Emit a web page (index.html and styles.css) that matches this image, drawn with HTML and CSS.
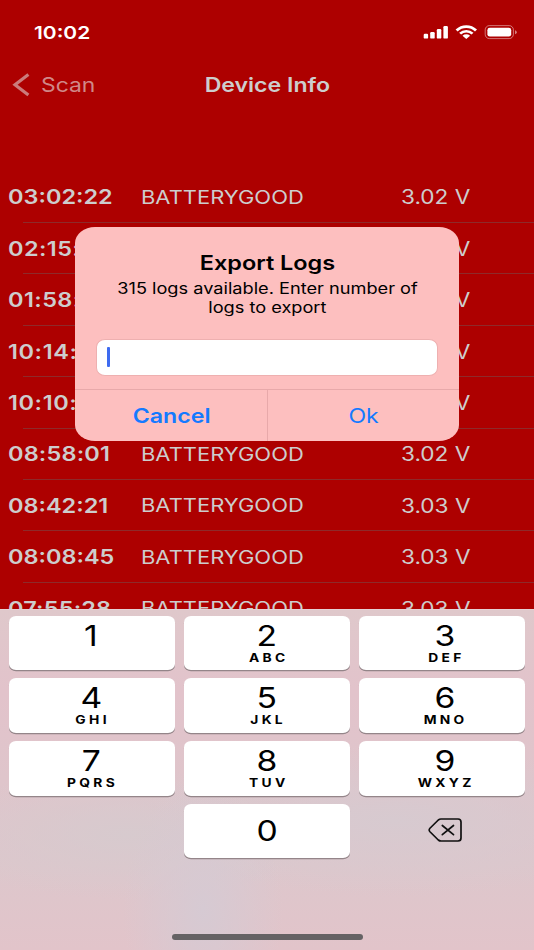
FILE: index.html
```
<!DOCTYPE html>
<html lang="en">
<head>
<meta charset="utf-8">
<title>Device Info</title>
<link rel="stylesheet" href="styles.css">
</head>
<body>
<div class="phone">
  <header class="status">
    <span class="clock">10:02</span>
    <svg class="status-icons" viewBox="0 0 96 16" width="96" height="16">
      <g fill="#fff">
        <rect x="0.7" y="9.8" width="4.4" height="4.8" rx="1.2"/>
        <rect x="7.2" y="8" width="4.5" height="6.6" rx="1.2"/>
        <rect x="13.8" y="5" width="4.5" height="9.6" rx="1.2"/>
        <rect x="20.4" y="2" width="4.5" height="12.6" rx="1.2"/>
        <path d="M32.6 5.6Q37.2 1.2 43.3 1.2Q49.4 1.2 54 5.6L52 7.4Q48.300 4 43.300 4Q38.300 4 34.600 7.400Z"/>
        <path d="M36.100 8.700Q39.200 5.900 43.300 5.900Q47.400 5.900 50.500 8.700L48.500 10.500Q46.300 8.600 43.300 8.600Q40.300 8.600 38.100 10.500Z"/>
        <path d="M39.500 11.700Q41.200 10.300 43.300 10.300Q45.400 10.300 47.100 11.700L43.300 15.100Z"/>
        <rect x="64.400" y="3.800" width="23.800" height="8.800" rx="2.400"/>
      </g>
      <rect x="62.200" y="1.600" width="28.200" height="13" rx="4.200" fill="none" stroke="#fff" stroke-opacity="0.45"/>
      <path d="M92 6.200Q93.800 6.700 93.800 8.200Q93.800 9.700 92 10.200Z" fill="#fff" fill-opacity="0.5"/>
    </svg>
  </header>

  <nav class="navbar">
    <a class="back">
      <svg viewBox="0 0 20 26" width="20" height="26"><path d="M17.400 2.500L4 12.700L17.400 23" fill="none" stroke="#cb7b7b" stroke-width="3.200"/></svg>
      <span class="back-label">Scan</span>
    </a>
    <h1>Device Info</h1>
  </nav>

  <main class="logs">
    <div class="row"><b>03:02:22</b><span class="name">BATTERYGOOD</span><span class="volt">3.02 V</span></div>
    <div class="row"><b class="loose">02:15:</b><span class="name"></span><span class="volt">3.02 V</span></div>
    <div class="row"><b class="loose">01:58:</b><span class="name"></span><span class="volt">3.02 V</span></div>
    <div class="row"><b class="looser">10:14:</b><span class="name"></span><span class="volt">3.02 V</span></div>
    <div class="row"><b class="looser">10:10:</b><span class="name"></span><span class="volt">3.02 V</span></div>
    <div class="row"><b class="tight">08:58:01</b><span class="name">BATTERYGOOD</span><span class="volt">3.02 V</span></div>
    <div class="row"><b>08:42:21</b><span class="name">BATTERYGOOD</span><span class="volt">3.03 V</span></div>
    <div class="row"><b>08:08:45</b><span class="name">BATTERYGOOD</span><span class="volt">3.03 V</span></div>
    <div class="row"><b class="tight">07:55:28</b><span class="name">BATTERYGOOD</span><span class="volt">3.03 V</span></div>
  </main>

  <section class="keyboard">
    <div class="keys">
      <div class="key left"><span class="digit">1</span><span class="letters"></span></div>
      <div class="key"><span class="digit">2</span><span class="letters">ABC</span></div>
      <div class="key right"><span class="digit">3</span><span class="letters">DEF</span></div>
      <div class="key left"><span class="digit">4</span><span class="letters">GHI</span></div>
      <div class="key"><span class="digit">5</span><span class="letters">JKL</span></div>
      <div class="key right"><span class="digit">6</span><span class="letters">MNO</span></div>
      <div class="key left"><span class="digit">7</span><span class="letters">PQRS</span></div>
      <div class="key"><span class="digit">8</span><span class="letters">TUV</span></div>
      <div class="key right"><span class="digit">9</span><span class="letters">WXYZ</span></div>
      <div class="key zero"><span class="digit">0</span></div>
      <div class="delete">
        <svg viewBox="0 0 36 26" width="36" height="26" fill="none" stroke="#111" stroke-width="1.700" stroke-linecap="round" stroke-linejoin="round">
          <path d="M14 2H31Q34 2 34 5V21Q34 24 31 24H14Q12.500 24 11.300 23L2.700 14.500Q1.500 13 2.700 11.500L11.300 3Q12.500 2 14 2Z"/>
          <path d="M15.300 8.500L26.500 17.700M26.500 8.500L15.300 17.700"/>
        </svg>
      </div>
    </div>
    <div class="home"></div>
  </section>

  <div class="dialog">
    <div class="content">
      <h2>Export Logs</h2>
      <p><span>315 logs available. Enter number of</span><span>logs to export</span></p>
      <div class="field"><i class="caret"></i></div>
    </div>
    <div class="actions">
      <div class="action cancel"><span>Cancel</span></div>
      <div class="action"><span>Ok</span></div>
    </div>
  </div>
</div>
</body>
</html>
```
FILE: styles.css
```
* { box-sizing: border-box; }
body { margin: 0; background: #ad0000; font-family: Inter, "Liberation Sans", sans-serif; }
.phone { position: relative; width: 534px; height: 950px; overflow: hidden; display: flex; flex-direction: column; background: #ad0000; color: #cdcdcd; }
span, b, h1, h2 { white-space: nowrap; }

.status { height: 64px; flex: none; display: flex; align-items: center; justify-content: space-between; padding: 0 15px 0 34px; }
.clock { color: #fff; font-size: 17.600px; font-weight: 600; transform: scaleX(1.190); transform-origin: 0 50%; }
.status-icons { display: block; }

.navbar { height: 41px; flex: none; display: grid; grid-template-columns: 1fr auto 1fr; align-items: center; }
.back { display: flex; align-items: center; padding-left: 11px; color: #d08888; font-size: 19.900px; }
.back-label { margin-left: 10px; transform: scaleX(1.150); transform-origin: 0 50%; }
h1 { margin: 0; font-size: 19.900px; font-weight: 600; transform: translateX(0.300px) scaleX(1.160); }

.logs { height: 504px; flex: none; padding-top: 66.400px; overflow: hidden; }
.row { position: relative; height: 51.450px; display: grid; grid-template-columns: 133.900px 260px 1fr; align-items: center; padding: 0.400px 0 0 7.600px; font-size: 19.900px; }
.row::after { content: ""; position: absolute; left: 23px; right: 0; bottom: 0; height: 1px; background: #8e2a2a; }
.row b { font-weight: 600; transform: scaleX(1.180); transform-origin: 0 50%; }
.row .tight { letter-spacing: 0.150px; }
.row .loose { letter-spacing: 0.350px; }
.row .looser { letter-spacing: 0.500px; }
.name { font-size: 18.700px; transform: scaleX(1.175); transform-origin: 0 50%; }
.volt { transform: scaleX(1.135); transform-origin: 0 50%; }

.keyboard { height: 341px; flex: none; padding: 6.400px 9px 0; display: flex; flex-direction: column; align-items: center; border-top: 1px solid #e5d2d5; color: #000;
  background:
    radial-gradient(ellipse 80px 130px at 38% 88%, #d6cad3, rgba(214,202,211,0)),
    radial-gradient(ellipse 200px 65px at 24% 66%, #d7cace, rgba(215,202,206,0)),
    radial-gradient(ellipse 260px 75px at 74% 62%, #d7cad0, rgba(215,202,208,0)),
    linear-gradient(#dfc8cb, #e2c3cb 24%, #dfc5cb 50%, #ddc7cc 75%, #e2c4ca); }
.keys { width: 100%; display: grid; grid-template-columns: repeat(3, 1fr); grid-template-rows: 54px 55px 55px 54px; gap: 8px 8.700px; }
.key { display: flex; flex-direction: column; align-items: center; background: #fff; border-radius: 7px / 6px; box-shadow: 0 1.300px 0 #948589; }
.left { padding-right: 2px; }
.right { padding-left: 5.400px; }
.digit { height: 37px; line-height: 40px; font-size: 29px; transform: scaleX(1.160); }
.letters { height: 9px; line-height: 9px; font-size: 11.700px; font-weight: 700; letter-spacing: 2.800px; margin-right: -2.800px; transform: translateY(1.200px) scaleX(1.180); }
.zero { grid-column: 2; justify-content: center; }
.zero .digit { line-height: 36px; }
.delete { display: flex; align-items: center; justify-content: center; padding: 0 0 2px 7px; }
.home { width: 191px; height: 6px; margin-top: 75.500px; border-radius: 3px; background: #656264; }

.dialog { position: absolute; left: 75.300px; top: 227px; width: 383.900px; height: 214px; border-radius: 20px / 16px; background: #fdbfbf; color: #000; display: flex; flex-direction: column; overflow: hidden; }
.content { height: 162px; flex: none; padding: 23.500px 21px 0; display: flex; flex-direction: column; align-items: center; }
h2 { margin: 0; height: 24px; line-height: 24px; font-size: 19.900px; font-weight: 600; transform: scaleX(1.178); }
p { margin: 4px 0 22.500px; display: flex; flex-direction: column; align-items: center; font-size: 15.200px; line-height: 19px; }
p span { transform: scaleX(1.197); }
.field { width: 342px; height: 36.500px; flex: none; border: 1px solid #eeb0b0; border-radius: 9px / 8px; background: #fff; display: flex; align-items: center; padding-left: 10px; }
.caret { width: 3px; height: 20px; border-radius: 1px; background: #3e6bf0; }
.actions { flex: 1; display: grid; grid-template-columns: 193px 1fr; border-top: 1px solid #e8a9aa; }
.action { display: flex; align-items: center; justify-content: center; color: #147aff; font-size: 19.900px; }
.action span { transform: translate(-0.500px, -0.200px) scaleX(1.160); }
.cancel { border-right: 1px solid #e8a9aa; font-weight: 600; }
.cancel span { transform: translate(0.200px, -0.200px) scaleX(1.165); }
```
